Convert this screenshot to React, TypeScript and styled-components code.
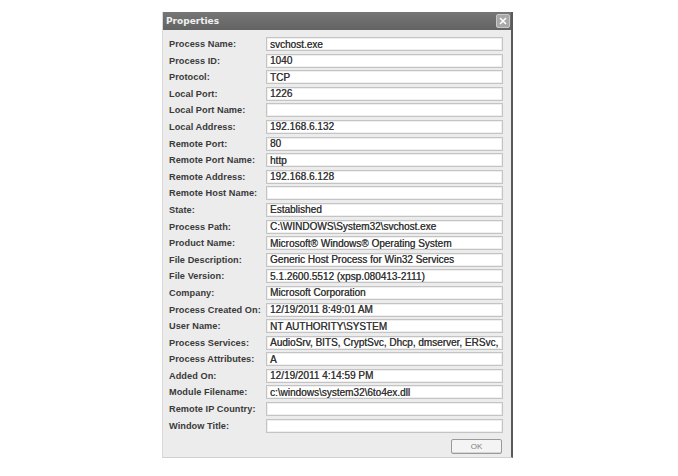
import React from "react";
import styled, { createGlobalStyle } from "styled-components";

const Global = createGlobalStyle`
  html, body { margin: 0; padding: 0; background: #ffffff; }
  body { width: 678px; height: 476px; overflow: hidden; }
`;

const Page = styled.div`
  width: 678px;
  height: 476px;
  padding: 12px 0 0 162px;
  box-sizing: border-box;
  font-family: "Liberation Sans", Arial, sans-serif;
`;

const Window = styled.div`
  width: 351px;
  height: 446px;
  box-sizing: border-box;
  background: #ececec;
  border-left: 1px solid #d8d8d8;
  border-right: 2px solid #5a5a5a;
  border-bottom: 1px solid #d0d0d0;
  display: flex;
  flex-direction: column;
`;

const TitleBar = styled.div`
  height: 18px;
  background: linear-gradient(#767676, #636363);
  display: flex;
  align-items: center;
  justify-content: space-between;
  padding: 0 1px 0 3px;
`;

const Title = styled.span`
  font-family: "DejaVu Sans", sans-serif;
  color: #f0f0f0;
  font-weight: bold;
  font-size: 9px;
`;

const CloseBtn = styled.div`
  width: 14px;
  height: 14px;
  box-sizing: border-box;
  border: 1px solid #c8c8c8;
  border-radius: 2px;
  background: #a8a8a8;
  display: flex;
  align-items: center;
  justify-content: center;
`;

const Body = styled.div`
  flex: 1;
  display: flex;
  flex-direction: column;
  padding: 7px 9px 0 6px;
`;

const Rows = styled.div`
  display: flex;
  flex-direction: column;
  gap: 2.6px;
`;

const Row = styled.div`
  display: grid;
  grid-template-columns: 97px 237px;
  align-items: center;
  height: 14px;
`;

const Label = styled.span`
  font-family: "Liberation Sans", Arial, sans-serif;
  font-weight: bold;
  font-size: 9.2px;
  letter-spacing: 0.05px;
  color: #3a3a3a;
  white-space: nowrap;
`;

const Field = styled.div`
  height: 14px;
  box-sizing: border-box;
  background: #ffffff;
  border: 1px solid #c4c4c4;
  box-shadow: inset 0 0 0 1px #efefef;
  padding: 0 3px;
  display: flex;
  align-items: center;
  font-family: "Liberation Sans", Arial, sans-serif;
  font-size: 10px;
  color: #333333;
  text-shadow: 0.3px 0 0 #555555;
  white-space: nowrap;
  overflow: hidden;
`;

const Footer = styled.div`
  display: flex;
  justify-content: flex-end;
  padding-top: 6px;
`;

const OkButton = styled.div`
  width: 51px;
  height: 15px;
  box-sizing: border-box;
  border: 1px solid #9a9a9a;
  border-radius: 2px;
  background: #f4f4f4;
  box-shadow: inset 0 -1px 0 #d6d6d6;
  display: flex;
  align-items: center;
  justify-content: center;
  font-family: "Liberation Sans", Arial, sans-serif;
  font-size: 8px;
  color: #808080;
`;

const fields: [string, string][] = [
  ["Process Name:", "svchost.exe"],
  ["Process ID:", "1040"],
  ["Protocol:", "TCP"],
  ["Local Port:", "1226"],
  ["Local Port Name:", ""],
  ["Local Address:", "192.168.6.132"],
  ["Remote Port:", "80"],
  ["Remote Port Name:", "http"],
  ["Remote Address:", "192.168.6.128"],
  ["Remote Host Name:", ""],
  ["State:", "Established"],
  ["Process Path:", "C:\\WINDOWS\\System32\\svchost.exe"],
  ["Product Name:", "Microsoft® Windows® Operating System"],
  ["File Description:", "Generic Host Process for Win32 Services"],
  ["File Version:", "5.1.2600.5512 (xpsp.080413-2111)"],
  ["Company:", "Microsoft Corporation"],
  ["Process Created On:", "12/19/2011 8:49:01 AM"],
  ["User Name:", "NT AUTHORITY\\SYSTEM"],
  ["Process Services:", "AudioSrv, BITS, CryptSvc, Dhcp, dmserver, ERSvc,"],
  ["Process Attributes:", "A"],
  ["Added On:", "12/19/2011 4:14:59 PM"],
  ["Module Filename:", "c:\\windows\\system32\\6to4ex.dll"],
  ["Remote IP Country:", ""],
  ["Window Title:", ""],
];

export default function App() {
  return (
    <>
      <Global />
      <Page>
        <Window>
          <TitleBar>
            <Title>Properties</Title>
            <CloseBtn>
              <svg width="8" height="8" viewBox="0 0 8 8">
                <path d="M1 1 L7 7 M7 1 L1 7" stroke="#ffffff" strokeWidth="1.6" />
              </svg>
            </CloseBtn>
          </TitleBar>
          <Body>
            <Rows>
              {fields.map(([k, v]) => (
                <Row key={k}>
                  <Label>{k}</Label>
                  <Field>{v}</Field>
                </Row>
              ))}
            </Rows>
            <Footer>
              <OkButton>OK</OkButton>
            </Footer>
          </Body>
        </Window>
      </Page>
    </>
  );
}
